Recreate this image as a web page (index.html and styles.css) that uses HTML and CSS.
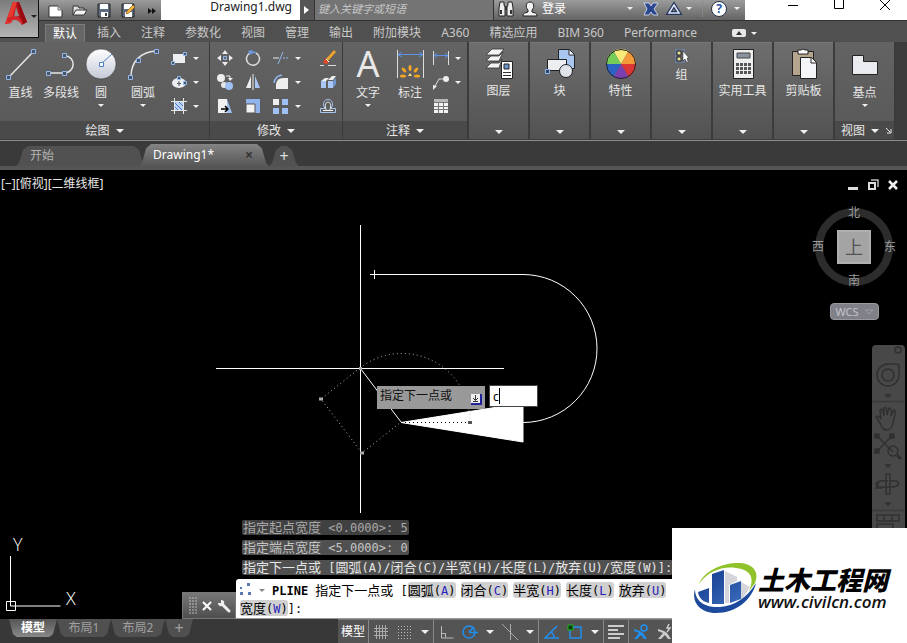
FILE: index.html
```html
<!DOCTYPE html>
<html lang="zh-CN">
<head>
  <meta charset="UTF-8">
  <title>Drawing1.dwg</title>
  <link rel="stylesheet" href="styles.css">
</head>
<body>
  <header class="top">
    <button class="app-btn" aria-label="应用程序菜单">
      <svg width="24" height="28" viewBox="0 0 24 28"><path d="M9 2h6l8 20-5 3-3-7-5-1-3 6-6 1z" fill="#b3141b"/><path d="M9 2h4L7 23l-6 1z" fill="#e8382f"/><path d="M12 7l3 9-5 1z" fill="#8f8f8f"/><path d="M3 19c5-4 11-4 16 3l-1 3c-4-6-9-7-14-2z" fill="#d4262a"/><path d="M13 2h2l8 20-4 2z" fill="#96090f"/></svg>
      <span class="caret dark"></span>
    </button>
    <div class="top-rows">
      <div class="titlebar">
        <div class="quick">
          <button aria-label="新建"><svg width="16" height="16" viewBox="0 0 16 16"><path d="M1 4h9l4 4v7H1z" fill="#fff" stroke="#333"/><path d="M10 4v4h4" fill="#ccc" stroke="#777"/></svg></button>
          <button aria-label="打开"><svg width="16" height="16" viewBox="0 0 16 16"><path d="M1 13V4h5l1 2h5v2" fill="#ddd" stroke="#333"/><path d="M1 13l3-5h11l-3 5z" fill="#f4f4f4" stroke="#333"/></svg></button>
          <button aria-label="保存"><svg width="16" height="16" viewBox="0 0 16 16"><path d="M2 2h12v13H2z" fill="#5e6c80" stroke="#222"/><path d="M4 2h8v5H4zM5 10h7v5H5z" fill="#fff"/><path d="M9 11h2v3H9z" fill="#444"/></svg></button>
          <button aria-label="另存为"><svg width="16" height="16" viewBox="0 0 16 16"><path d="M2 2h12v13H2z" fill="#5e6c80" stroke="#222"/><path d="M4 2h8v5H4zM5 10h7v5H5z" fill="#fff"/><path d="M6 12l1-3 6-6 2 2-6 6z" fill="#f2b63c" stroke="#7c4a10" stroke-width=".6"/></svg></button>
          <button aria-label="更多"><svg width="16" height="16" viewBox="0 0 16 16"><path d="M4 6l4 3-4 3zM8 6l4 3-4 3z" fill="#111"/></svg></button>
        </div>
        <div class="doc-name">Drawing1.dwg</div>
        <button class="play" aria-label="展开"><svg width="6" height="8" viewBox="0 0 6 8"><path d="M0 0l5 4-5 4z" fill="#fff"/></svg></button>
        <input class="search" type="text" placeholder="键入关键字或短语" aria-label="搜索">
        <div class="info">
          <svg width="18" height="16" viewBox="0 0 18 16"><path d="M3 1h4v3l1 2v9H2V7zM11 1h4l1 6v8h-6V6l1-2z" fill="#eee" stroke="#222"/><path d="M8 5h2v4H8z" fill="#333"/><path d="M4 9v4M14 9v4" stroke="#333" stroke-width="2"/></svg>
          <button class="login"><svg width="16" height="16" viewBox="0 0 16 16"><path d="M1 15c0-3 2-3 5-4V9C3 6 4 1 8 1s5 5 2 8v2c3 1 5 1 5 4z" fill="#f2f2f2" stroke="#222"/></svg>登录<span class="caret"></span></button>
          <svg width="16" height="14" viewBox="0 0 16 14"><path d="M1 1h5l2 3 2-3h5l-4 6 4 6h-5l-2-3-2 3H1l3-6z" fill="#2a4690" stroke="#e0e6f5" stroke-width=".8"/></svg>
          <button class="tri" aria-label="A360"><svg width="16" height="14" viewBox="0 0 16 14"><path d="M8 3L3 11h10z" fill="none" stroke="#26355c" stroke-width="4"/><path d="M8 3L3 11h10z" fill="none" stroke="#dbe4f8" stroke-width="1.500"/></svg><span class="caret"></span></button>
          <button class="help" aria-label="帮助"><i>?</i><span class="caret"></span></button>
        </div>
        <div class="win-btns">
          <button aria-label="最小化"><svg width="12" height="12" viewBox="0 0 12 12"><path d="M1 6.500h10" stroke="#000"/></svg></button>
          <button aria-label="最大化"><svg width="12" height="12" viewBox="0 0 12 12"><path d="M1.500 .5h9v9h-9z" fill="none" stroke="#000"/></svg></button>
          <button aria-label="关闭"><svg width="12" height="12" viewBox="0 0 12 12"><path d="M1 1l10 10M11 1L1 11" stroke="#000"/></svg></button>
        </div>
      </div>
      <nav class="tabs">
        <button class="on">默认</button><button>插入</button><button>注释</button><button>参数化</button><button>视图</button><button>管理</button><button>输出</button><button>附加模块</button><button>A360</button><button>精选应用</button><button>BIM 360</button><button>Performance</button>
        <button class="fold" aria-label="最小化功能区"><svg width="14" height="8" viewBox="0 0 14 8"><rect width="14" height="8" rx="2" fill="#e8e8e8"/><path d="M4 6l3-4 3 4z" fill="#333"/></svg><span class="caret"></span></button>
      </nav>
    </div>
  </header>

  <section class="ribbon">
    <div class="panel">
      <div class="tools draw">
        <button class="big"><svg width="32" height="32" viewBox="0 0 32 32"><path d="M4 29L28 4" stroke="#e6e6e6" stroke-width="1.500"/><path d="M1.500 27.500h4v4h-4zM26.500 1.500h4v4h-4z" fill="#4a5460" stroke="#8fb8f0"/></svg>直线</button>
        <button class="big"><svg width="32" height="32" viewBox="0 0 32 32"><path d="M3 25h16c12 0 12-17 1-17" fill="none" stroke="#e6e6e6" stroke-width="1.500"/><path d="M1.500 23.500h4v4h-4zM17.500 23.500h4v4h-4zM17.500 5.500h4v4h-4z" fill="#4a5460" stroke="#8fb8f0"/></svg>多段线</button>
        <button class="big"><svg width="32" height="32" viewBox="0 0 32 32"><defs><linearGradient id="ball" x2="0" y2="1"><stop stop-color="#fff"/><stop offset="1" stop-color="#c3c9d6"/></linearGradient></defs><circle cx="16" cy="16" r="15" fill="url(#ball)" stroke="#333" stroke-width=".5"/><path d="M16 16L27 6" stroke="#5580c8"/><path d="M14.500 14.500h4v4h-4z" fill="#fff" stroke="#4a7cc8"/></svg>圆<span class="caret"></span></button>
        <button class="big"><svg width="32" height="32" viewBox="0 0 32 32"><path d="M4 29C4 13 14 4 29 3" fill="none" stroke="#e6e6e6" stroke-width="1.500"/><path d="M1.500 27.500h4v4h-4zM9.500 10.500h4v4h-4zM27.500 1.500h4v4h-4z" fill="#4a5460" stroke="#8fb8f0"/></svg>圆弧<span class="caret"></span></button>
        <div class="smalls">
          <button aria-label="矩形"><svg width="16" height="16" viewBox="0 0 16 16"><path d="M2 4h12v9H2z" fill="#eceef2"/><path d="M.5 11.500h3v3h-3zM12.500 2.500h3v3h-3z" fill="#4a5460" stroke="#8fb8f0"/></svg><span class="caret"></span></button>
          <button aria-label="椭圆"><svg width="16" height="16" viewBox="0 0 16 16"><ellipse cx="8" cy="9" rx="7" ry="5" fill="#eceef2"/><path d="M8 7v5M6 9.500h4" stroke="#555"/><path d="M6.500 2.500h3v3h-3zM12.500 7.500h3v3h-3z" fill="#4a5460" stroke="#8fb8f0"/></svg><span class="caret"></span></button>
          <button aria-label="图案填充"><svg width="16" height="16" viewBox="0 0 16 16"><path d="M3 3h10v10H3z" fill="#bcd2f4"/><path d="M3 8l5 5M3 4l9 9M7 3l6 6M11 3l2 2" stroke="#4b78c4"/><path d="M3.500 0v16M12.500 0v16M0 3.500h16M0 12.500h16" stroke="#e6e6e6"/></svg><span class="caret"></span></button>
        </div>
      </div>
      <button class="panel-title">绘图<span class="caret wide"></span></button>
    </div>

    <div class="panel">
      <div class="tools modify">
        <button aria-label="移动"><svg width="16" height="16" viewBox="0 0 16 16"><path d="M8 0l3 4H5zM8 16l3-4H5zM0 8l4-3v6zM16 8l-4-3v6z" fill="#eee"/><path d="M6.500 6.500h3v3h-3z" fill="none" stroke="#8fb8f0"/></svg></button>
        <button aria-label="旋转"><svg width="16" height="16" viewBox="0 0 16 16"><path d="M5 3a6.500 6.500 0 1 0 6 0" fill="none" stroke="#ddd" stroke-width="1.500"/><path d="M11 3Q8 1 4 4" fill="none" stroke="#6d9ce4" stroke-width="1.500"/><path d="M3 1l5-1-2 5z" fill="#6d9ce4"/></svg></button>
        <button class="with-caret" aria-label="修剪"><svg width="16" height="16" viewBox="0 0 16 16"><path d="M0 8h6" stroke="#eee"/><path d="M10 8h6" stroke="#8fb8f0" stroke-dasharray="2 1"/><path d="M5 14l5-12" stroke="#8fb8f0"/></svg><span class="caret"></span></button>
        <button aria-label="删除"><svg width="16" height="16" viewBox="0 0 16 16"><path d="M6 9l8-9 2 2-8 9z" fill="#f0a32a"/><path d="M5 8l4 4-2 2-4-1z" fill="#e0482a"/><path d="M6 9l3 3" stroke="#fff"/><path d="M0 15.500h4M8 15.500h8" stroke="#ddd"/></svg></button>
        <button aria-label="复制"><svg width="16" height="16" viewBox="0 0 16 16"><circle cx="4" cy="4" r="4" fill="#eee"/><circle cx="7" cy="11" r="3" fill="#e8e8e8"/><circle cx="12" cy="12" r="4" fill="#9fc0f2"/><path d="M9 2h4v3" fill="none" stroke="#eee"/><path d="M11 4h5l-3 3z" fill="#eee"/></svg></button>
        <button aria-label="镜像"><svg width="16" height="16" viewBox="0 0 16 16"><path d="M6 2v12H1z" fill="#eceef2"/><path d="M10 2v12h5z" fill="#a9c6f4"/><path d="M8 0v16" stroke="#eee"/></svg></button>
        <button class="with-caret" aria-label="圆角"><svg width="16" height="16" viewBox="0 0 16 16"><path d="M3 15V10q1-6 7-6h5v11z" fill="#eee"/><path d="M1 9q1-7 8-8" fill="none" stroke="#8fb8f0" stroke-width="1.500"/></svg><span class="caret"></span></button>
        <button aria-label="分解"><svg width="16" height="16" viewBox="0 0 16 16"><path d="M1 7h5v7H1zM8 7h5v7H8z" fill="#a9c6f4"/><path d="M1 7l4-3h4L6 7zM8 6l4-4h4l-3 4z" fill="#eee"/><path d="M13 7l3-3v6l-3 4z" fill="#7097cf"/></svg></button>
        <button aria-label="拉伸"><svg width="16" height="16" viewBox="0 0 16 16"><path d="M1 1h9v14H1z" fill="#f2f2f2"/><path d="M10 1l5 14h-5z" fill="#9fc0f2"/><path d="M4 11h6M8 8l3 3-3 3" fill="none" stroke="#000" stroke-width="1.500"/></svg></button>
        <button aria-label="缩放"><svg width="16" height="16" viewBox="0 0 16 16"><path d="M1 1h14v14H1z" fill="#8fb3ea"/><path d="M1 6h9v9H1z" fill="#f2f2f2" stroke="#555"/></svg></button>
        <button class="with-caret" aria-label="阵列"><svg width="16" height="16" viewBox="0 0 16 16"><path d="M0 1h6v6H0z" fill="#eee"/><path d="M9 1h6v6H9zM0 10h6v6H0zM9 10h6v6H9z" fill="#9fc0f2"/></svg><span class="caret"></span></button>
        <button aria-label="偏移"><svg width="16" height="16" viewBox="0 0 16 16"><path d="M.5 14.500v-4H5C2 6 4 1.500 8 1.500s6 4.500 3 9h4.500v4z" fill="none" stroke="#a9c6f4"/><path d="M3 12.500h10M6.500 12.500C4 7 6 4 8 4s4 3 1.500 8.500" fill="none" stroke="#eee"/></svg></button>
      </div>
      <button class="panel-title">修改<span class="caret wide"></span></button>
    </div>

    <div class="panel">
      <div class="tools annotate">
        <button class="big"><svg width="32" height="32" viewBox="0 0 32 32"><text x="16" y="29" text-anchor="middle" font-size="36" fill="#e8e8e8">A</text></svg>文字<span class="caret"></span></button>
        <button class="big"><svg width="32" height="32" viewBox="0 0 32 32"><path d="M3.500 2v28M29.500 2v28" stroke="#ddd"/><path d="M4 6.500h25M8 4L4 6.500 8 9M25 4l4 2.500L25 9" fill="none" stroke="#5d93e6"/><g fill="#f5a623"><ellipse cx="16" cy="20" rx="1.500" ry="3"/><ellipse cx="10" cy="22" rx="1.500" ry="3" transform="rotate(-40 10 22)"/><ellipse cx="22" cy="22" rx="1.500" ry="3" transform="rotate(40 22 22)"/><ellipse cx="9" cy="28" rx="3" ry="1.500"/><ellipse cx="23" cy="28" rx="3" ry="1.500"/></g><path d="M14 28l2-3 2 3z" fill="#ffe27a"/></svg>标注</button>
        <div class="smalls">
          <button aria-label="线性"><svg width="16" height="16" viewBox="0 0 16 16"><path d="M.5 1v14M15.500 1v14" stroke="#ddd"/><path d="M1 5.500h14M4 3L1 5.500 4 8M12 3l3 2.500L12 8" fill="none" stroke="#5d93e6"/></svg><span class="caret"></span></button>
          <button aria-label="引线"><svg width="16" height="16" viewBox="0 0 16 16"><circle cx="13" cy="5" r="3" fill="#eee"/><path d="M10 5H6L1 14" fill="none" stroke="#ddd"/><path d="M0 11v5l4-4z" fill="#eee"/></svg><span class="caret"></span></button>
          <button aria-label="表格"><svg width="16" height="16" viewBox="0 0 16 16"><path d="M1 1h14v14H1z" fill="#f2f2f2"/><path d="M1 1h14v3H1z" fill="#b8b8b8"/><path d="M1 4.500h14M1 8.500h14M1 11.500h14M5.500 4v11M10.500 4v11" stroke="#777"/></svg></button>
        </div>
      </div>
      <button class="panel-title">注释<span class="caret wide"></span></button>
    </div>

    <button class="slim">
      <svg width="32" height="32" viewBox="0 0 32 32"><path d="M3 7L9 1h12l-5 6zM3 13l5-5h8l4-4-4 9zM3 20l5-5h8l3-4-3 9z" fill="#f4f4f4" stroke="#333" stroke-width=".8"/><path d="M18.500 13.500h11v17h-11z" fill="#fff" stroke="#222"/><path d="M21 16h5v5h-5z" fill="#6d93cc" stroke="#222"/><path d="M20 24.500h8M20 27.500h8" stroke="#333"/></svg>
      图层<span class="caret wide"></span>
    </button>
    <button class="slim">
      <svg width="32" height="32" viewBox="0 0 32 32"><path d="M14.500 1.500h11l5 5v14h-16z" fill="#a9c6f0" stroke="#222"/><path d="M25 2v5h5" fill="#fff" stroke="#222"/><path d="M3.500 11.500h19v11h-19z" fill="#eceef2" stroke="#222"/><circle cx="22" cy="23" r="6.500" fill="#dfe3ea" stroke="#222"/><path d="M1.500 21.500h4v4h-4z" fill="#31445f" stroke="#8fb8f0"/></svg>
      块<span class="caret wide"></span>
    </button>
    <button class="slim">
      <svg width="32" height="32" viewBox="0 0 32 32"><path d="M16 16L8.500 3a15 15 0 0 1 15 0z" fill="#f7e87a"/><path d="M16 16l7.500-13A15 15 0 0 1 31 16z" fill="#f29a3a"/><path d="M16 16h15a15 15 0 0 1-7.500 13z" fill="#dc3535"/><path d="M16 16l7.500 13a15 15 0 0 1-15 0z" fill="#7b3fb0"/><path d="M16 16L8.500 29A15 15 0 0 1 1 16z" fill="#2c62c4"/><path d="M16 16H1A15 15 0 0 1 8.500 3z" fill="#76cc58"/><circle cx="16" cy="16" r="14.500" fill="none" stroke="#222"/></svg>
      特性<span class="caret wide"></span>
    </button>
    <button class="slim">
      <svg width="16" height="16" viewBox="0 0 16 16"><path d="M1.500 1.500h9v13h-9z" fill="none" stroke="#5d93e6" stroke-dasharray="1 1"/><path d="M3 3h4v4H3zM3 9h4v4H3z" fill="#e4e0a0" stroke="#222"/><path d="M9 3v10l2-2 2 4 1-1-1-4h2z" fill="#fff" stroke="#222" stroke-width=".5"/></svg>
      组<span class="caret wide"></span>
    </button>
    <button class="slim">
      <svg width="32" height="32" viewBox="0 0 32 32"><path d="M6.500 1.500h20v29h-20z" fill="#eee" stroke="#222"/><path d="M10 5h13v5H10z" fill="#8a94a0" stroke="#444"/><path d="M9 15h3v3H9zM13 15h3v3h-3zM17 15h3v3h-3zM21 15h3v3h-3zM9 19h3v3H9zM13 19h3v3h-3zM17 19h3v3h-3zM21 19h3v3h-3zM9 23h3v3H9zM13 23h3v3h-3zM17 23h3v3h-3zM21 23h3v3h-3z" fill="#555"/></svg>
      实用工具<span class="caret wide"></span>
    </button>
    <button class="slim">
      <svg width="32" height="32" viewBox="0 0 32 32"><path d="M4.500 3.500h21v24h-21z" fill="#b5a58f" stroke="#222"/><path d="M10 2h3l2-1 2 1h3v4H10z" fill="#fff" stroke="#222"/><path d="M12.500 9.500h11l5 5v16h-16z" fill="#f4f5f8" stroke="#222"/><path d="M23 10v5h5" fill="#fff" stroke="#222"/></svg>
      剪贴板<span class="caret wide"></span>
    </button>
    <div class="panel view">
      <div class="tools">
        <button class="big"><svg width="32" height="32" viewBox="0 0 32 32"><path d="M3.500 7.500h11v6h14v13h-25z" fill="#e9ebee" stroke="#222"/></svg>基点<span class="caret"></span></button>
      </div>
      <button class="panel-title">视图<span class="caret wide"></span><svg width="7" height="7" viewBox="0 0 7 7"><path d="M1 1l4 4M6 2v4H2" fill="none" stroke="#eee"/></svg></button>
    </div>
  </section>

  <nav class="files">
    <button class="file start">开始</button>
    <button class="file current">Drawing1*<span class="close">×</span></button>
    <button class="file add">+</button>
  </nav>

  <main class="canvas">
    <svg class="drawing" width="100%" height="100%">
      <g stroke="#fff" fill="none">
        <path d="M360.500 55v288M216 198.500h288"/>
        <path d="M370 104.500h153a74 74 0 0 1 0 148M374.500 100v9"/>
        <path d="M401 252.500L523 233v39z" fill="#fff"/>
        <path d="M360.500 198.500L401 252"/>
        <g stroke="#bbb" stroke-dasharray="1 3">
          <path d="M360 198l-39 31 41 54 39-31"/>
          <path d="M360 198a68 68 0 0 1 110 54"/>
        </g>
        <path d="M405 252.500h64" stroke="#000" stroke-dasharray="1 3"/>
        <path d="M10.500 386v50h50M6.500 431.500h9v9h-9z"/>
      </g>
      <path d="M319 227.500h4v3h-4zM360 281.500h4v3h-4zM359 197h3v3h-3z" fill="#aaa"/>
      <path d="M468 251h4v3h-4z" fill="#555"/>
      <text class="axis" x="13" y="381">Y</text>
      <text class="axis" x="66" y="435">X</text>
    </svg>

    <div class="view-label">[−][俯视][二维线框]</div>
    <div class="view-btns">
      <button aria-label="最小化"><svg width="12" height="12" viewBox="0 0 12 12"><path d="M1 8h10v3H1z" fill="#ddd"/></svg></button>
      <button aria-label="还原"><svg width="12" height="12" viewBox="0 0 12 12"><path d="M4 1h7v7" fill="none" stroke="#bbb" stroke-width="1.500"/><path d="M2 4h6v6H2z" fill="none" stroke="#ddd" stroke-width="2"/></svg></button>
      <button aria-label="关闭"><svg width="12" height="12" viewBox="0 0 12 12"><path d="M2 2l8 8M10 2l-8 8" stroke="#eee" stroke-width="2.500"/></svg></button>
    </div>

    <div class="compass">
      <span>北</span>
      <div class="ew"><span>西</span><button class="cube">上</button><span>东</span></div>
      <span>南</span>
    </div>
    <button class="wcs">WCS <svg width="10" height="6" viewBox="0 0 10 6"><path d="M1 1h8L5 5z" fill="none" stroke="#9c9ca4"/></svg></button>

    <div class="navbar">
      <svg width="32" height="190" viewBox="0 0 32 190" fill="none" stroke="#303030" stroke-width="1.500">
        <circle cx="26" cy="5" r="3"/>
        <path d="M16 19h8q3 0 3 3v8a11 11 0 1 1-11-11z"/><circle cx="16" cy="30" r="6"/><path d="M0 56.500h32M0 165.500h32" stroke="#3a3a3a"/>
        <path d="M8 78l-4-6c2-2 4 0 5 2l-1-9c2-2 3 0 4 6V63c2-1 3 0 3 7l2-7c2 0 3 1 2 8l3-6c2 1 2 2 0 8-1 8-3 12-7 12s-5-3-7-7z"/>
        <path d="M5 91l16 16M20 91L5 106"/><path d="M3 89h4v4H3zM18 89h4v4h-4zM3 104h4v4H3z" fill="#303030"/><circle cx="21" cy="106" r="5"/><path d="M25 110l4 4" stroke-width="3"/>
        <path d="M14 129h4v20h-4zM16 136c-16-2-16 8 0 6 14 1 14-8 2-6M7 137l-3 6h6"/>
        <path d="M5 170h22v6H5zM5 179h16v6H5zM12 170v6M20 170v6"/>
        <path d="M14 50h4l-2 2zM14 120h4l-2 2zM14 158h4l-2 2z" fill="#303030"/>
      </svg>
    </div>

    <label class="prompt" for="dyn">指定下一点或<svg width="11" height="11" viewBox="0 0 11 11"><path d="M0 0h11v11H0z" fill="#22229c"/><path d="M0 0h9v9H0z" fill="#eee"/><path d="M4.500 1v5M2 4l2.500 2.500L7 4M2 7.500h5" fill="none" stroke="#333"/></svg></label>
    <div class="dyn-box"><input id="dyn" type="text" value="c"><span class="cursor"></span></div>

    <div class="history">
      <p class="old">指定起点宽度<code> &lt;0.0000&gt;: 5</code></p>
      <p class="mid">指定端点宽度<code> &lt;5.0000&gt;: 0</code></p>
      <p>指定下一点或<code> [</code>圆弧<code>(A)/</code>闭合<code>(C)/</code>半宽<code>(H)/</code>长度<code>(L)/</code>放弃<code>(U)/</code>宽度<code>(W)]:</code></p>
    </div>
    <div class="command">
      <div class="grip">
        <svg width="8" height="18" viewBox="0 0 8 18"><path d="M1 0v18M4 0v18M7 0v18" stroke="#bbb" stroke-dasharray="2 1"/></svg>
        <button aria-label="关闭"><svg width="10" height="10" viewBox="0 0 10 10"><path d="M1 1l8 8M9 1L1 9" stroke="#fff" stroke-width="2"/></svg></button>
        <button aria-label="自定义"><svg width="14" height="14" viewBox="0 0 14 14"><path d="M5 5l7 7" stroke="#eee" stroke-width="3" stroke-linecap="round"/><path d="M4 1v3H1c0 4 5 4 6 1s-1-4-3-4z" fill="#eee"/></svg></button>
      </div>
      <div class="line">
        <svg width="12" height="12" viewBox="0 0 12 12"><path d="M7 0h3v3H7zM0 4h2v2H0zM0 9h3v3H0zM8 9h3v3H8z" fill="#5a78b8"/></svg><span class="caret grey"></span><code><b>PLINE</b> </code>指定下一点或<code> [</code><button>圆弧<code>(<i>A</i>)</code></button><button>闭合<code>(<i>C</i>)</code></button><button>半宽<code>(<i>H</i>)</code></button><button>长度<code>(<i>L</i>)</code></button><button>放弃<code>(<i>U</i>)</code></button><br>
        <button>宽度<code>(<i>W</i>)</code></button><code>]:</code>
      </div>
    </div>
  </main>

  <footer class="bottom">
    <nav class="layouts">
      <button class="on">模型</button><button>布局1</button><button>布局2</button><button class="plus">+</button>
    </nav>
    <div class="status">
      <button class="space">模型</button>
      <div class="group">
        <button aria-label="栅格"><svg width="16" height="16" viewBox="0 0 16 16"><path d="M3.500 1v14M6.500 1v14M9.500 1v14M12.500 1v14M1 4.500h14M1 7.500h14M1 11.500h14" stroke="#aaa"/></svg></button>
        <button aria-label="捕捉"><svg width="16" height="16" viewBox="0 0 16 16"><path d="M1 2.500h15M1 5.500h15M1 8.500h15M1 11.500h15M1 14.500h15" stroke="#bbb" stroke-dasharray="1 2"/></svg></button>
        <span class="caret wide"></span>
      </div>
      <div class="group">
        <button aria-label="正交"><svg width="16" height="16" viewBox="0 0 16 16"><path d="M3.500 2v12h12M3.500 9.500h4v4" fill="none" stroke="#bbb"/></svg></button>
        <button aria-label="极轴"><svg width="16" height="16" viewBox="0 0 16 16"><circle cx="7" cy="8" r="6" fill="none" stroke="#1f8ff0" stroke-width="1.500"/><path d="M7 8.500h9M7 8l5-5" stroke="#1f8ff0" stroke-width="1.500"/></svg></button>
        <span class="caret wide"></span>
        <button aria-label="等轴测"><svg width="16" height="16" viewBox="0 0 16 16"><path d="M0 0l16 16M8.500 0v16" stroke="#aaa"/></svg></button>
        <span class="caret wide"></span>
      </div>
      <div class="group">
        <button aria-label="追踪"><svg width="16" height="16" viewBox="0 0 16 16"><path d="M14 2L2 14h14M8 8q3 2 3 6" fill="none" stroke="#1f8ff0" stroke-width="1.500"/></svg></button>
        <button aria-label="对象捕捉"><svg width="16" height="16" viewBox="0 0 16 16"><path d="M3 3h11v11H3z" fill="none" stroke="#1f8ff0" stroke-width="1.500"/><path d="M1 1h5v5H1z" fill="#0a3c0a" stroke="#22b422"/></svg></button>
        <span class="caret wide"></span>
      </div>
      <div class="group">
        <button aria-label="线宽"><svg width="16" height="16" viewBox="0 0 16 16"><path d="M0 2h16M0 6h10M0 10h16M0 14h12" stroke="#ccc" stroke-width="2"/></svg></button>
      </div>
      <div class="group">
        <button aria-label="注释可见性"><svg width="16" height="16" viewBox="0 0 16 16"><circle cx="11" cy="4" r="3" fill="none" stroke="#1f8ff0" stroke-width="1.500"/><path d="M1 5l6 2 3 2 4 6h-3l-3-4-4 4H1l5-6-5-2z" fill="#1f8ff0"/></svg></button>
        <button aria-label="自动缩放"><svg width="16" height="16" viewBox="0 0 16 16"><path d="M12 0l-2 4h3l-3 4" fill="none" stroke="#ccc" stroke-width="1.500"/><path d="M1 5l6 2 3 2 4 6h-3l-3-4-4 4H1l5-6-5-2z" fill="#ccc"/></svg></button>
      </div>
    </div>
  </footer>

  <aside class="brand">
    <svg width="66" height="54" viewBox="0 0 66 54">
      <defs><linearGradient id="tower" x2="1" y2="1"><stop stop-color="#12388a"/><stop offset="1" stop-color="#3a6cbc"/></linearGradient></defs>
      <path d="M31 10l12 6v4l-8 4v18h-4zM47 21l9 5-7 11-2 1z" fill="#d4d6dc"/>
      <path d="M4 31l11-4v15C10 41 5 38 4 31zM18 13l12-4v34H18zM36 24l11-4v18l-11 4z" fill="url(#tower)"/>
      <path d="M5 23C10 10 28 2 44 2c14 0 22 8 17 20l-6 8c5-11 4-21-13-23C28 5 13 11 5 23z" fill="#8fc329"/>
      <path d="M1 28c-4 14 6 24 21 24 20 0 36-13 40-30-9 15-22 23-36 24C12 47 1 41 1 28z" fill="#1d4a9c"/>
    </svg>
    <div class="brand-text"><strong>土木工程网</strong><a href="#">www.civilcn.com</a></div>
  </aside>
</body>
</html>
```
FILE: styles.css
```css
* {
  box-sizing: border-box;
}
body {
  margin: 0;
  height: 100vh;
  display: flex;
  flex-direction: column;
  overflow: hidden;
  position: relative;
  background: #000;
  color: #e6e6e6;
  font: 12px/18px "Noto Sans", "Noto Sans CJK SC", sans-serif;
}
button {
  display: flex;
  align-items: center;
  justify-content: center;
  padding: 0;
  border: 0;
  background: none;
  color: inherit;
  font: inherit;
  white-space: nowrap;
}
svg {
  flex: none;
  overflow: visible;
}
.caret {
  flex: none;
  border: 3px solid transparent;
  border-top-color: #f0f0f0;
  border-bottom: 0;
}
.caret.wide {
  border-width: 4px 4px 0;
}
.caret.dark {
  border-top-color: #222;
}
.caret.grey {
  border-top-color: #888;
}

/* title bar + ribbon tabs */
.top {
  display: flex;
  height: 42px;
  flex: none;
  background: #505050;
}
.app-btn {
  width: 39px;
  height: 38px;
  align-items: flex-start;
  padding-left: 2px;
  gap: 3px;
  background: linear-gradient(#7c7c7c, #b4b4b4);
  border: solid #111;
  border-width: 0 1px 1px 0;
}
.app-btn .caret {
  margin-top: 15px;
}
.top-rows {
  flex: 1;
  min-width: 0;
}
.titlebar {
  display: flex;
  height: 21px;
  border-bottom: 1px solid #333;
  background: linear-gradient(#9c9c9c, #636363);
}
.quick {
  width: 122px;
  display: flex;
  gap: 8px;
  padding-left: 9px;
}
.doc-name {
  flex: 1;
  min-width: 0;
  padding-right: 8px;
  background: #fff;
  color: #222;
  text-align: right;
  line-height: 13px;
}
.play {
  width: 14px;
  background: #555;
}
.search {
  width: 180px;
  padding: 0 3px 3px;
  border: 1px solid #333;
  border-width: 0 1px 0 1px;
  background: #747474;
  font: italic 11px "Noto Sans", "Noto Sans CJK SC", sans-serif;
}
.search::placeholder {
  color: #c6c6c6;
}
.info {
  width: 251px;
  display: flex;
  align-items: center;
  gap: 7px;
  padding: 0 5px 3px 3px;
}
.login {
  gap: 4px;
  color: #fff;
}
.login .caret {
  margin: 0 3px 0 57px;
}
.tri {
  gap: 4px;
}
.help {
  gap: 7px;
  margin-left: 3px;
  padding-left: 8px;
  border-left: 1px solid #888;
}
.help i {
  width: 16px;
  height: 16px;
  border-radius: 50%;
  background: #fff;
  border: 1px solid #234;
  color: #2456a8;
  font: bold 12px/14px "Noto Sans", sans-serif;
}
.win-btns {
  width: 162px;
  display: flex;
  justify-content: flex-end;
  gap: 34px;
  padding: 0 16px 10px 0;
  background: #fff;
}
.tabs {
  display: flex;
  align-items: flex-end;
  height: 21px;
  padding-left: 4px;
  color: #c8c8c8;
}
.tabs button {
  height: 18px;
  margin: 0 2px;
  padding: 0 8px;
}
.tabs .on {
  background: #666;
  border: 1px solid #7c7c7c;
  border-bottom: 0;
  padding: 0 7px;
  color: #fff;
}
.tabs .fold {
  gap: 5px;
  margin-left: 17px;
}

/* ribbon */
.ribbon {
  display: flex;
  flex: none;
  height: 99px;
  padding-bottom: 1px;
  border-bottom: 1px solid #8a8d8a;
  background: #3c3c3c;
}
.panel {
  display: flex;
  flex-direction: column;
  border-right: 1px solid #3a3a3a;
  background: linear-gradient(#636363, #585858);
}
.tools {
  flex: 1;
  display: grid;
  padding-top: 4px;
}
.draw {
  grid-template-columns: 41px 40px 40px 44px 44px;
}
.modify {
  grid-template-columns: 29px 28px 46px 29px;
  grid-auto-rows: 24px;
}
.annotate {
  grid-template-columns: 50px 34px 40px;
}
.big {
  flex-direction: column;
  justify-content: flex-start;
  padding-top: 2px;
}
.big svg {
  margin-bottom: 4px;
}
.big .caret {
  margin-top: 2px;
}
.smalls button, .with-caret {
  width: 100%;
  height: 24px;
  justify-content: flex-start;
  padding-left: 6px;
  gap: 6px;
}
.panel-title {
  height: 18px;
  padding-top: 1px;
  gap: 6px;
  background: #4a4a4a;
}
.slim {
  width: 59px;
  margin-left: 2px;
  flex-direction: column;
  justify-content: flex-start;
  padding: 5px 0;
  gap: 2px;
  background: linear-gradient(#6e6e6e, #525252);
  border-top: 1px solid #777;
}
.panel + .slim {
  margin-left: 1px;
}
.slim .caret {
  margin-top: auto;
}
.view {
  width: 60px;
  margin-left: 2px;
}
.view .panel-title {
  padding-left: 4px;
}

/* drawing file tabs */
.files {
  display: flex;
  align-items: flex-end;
  flex: none;
  height: 29px;
  padding-left: 16px;
  background: #3a3a3a;
  border-bottom: 4px solid #555;
}
.file {
  height: 20px;
  justify-content: flex-start;
  background: #515151;
  color: #b4b4b4;
  clip-path: polygon(0 100%, 3px 85%, 7px 20%, 12px 0, calc(100% - 12px) 0, calc(100% - 7px) 20%, calc(100% - 3px) 85%, 100% 100%);
}
.start {
  width: 130px;
  padding-left: 14px;
}
.current {
  width: 130px;
  height: 22px;
  margin-left: -7px;
  padding: 0 16px 0 14px;
  background: linear-gradient(#848484, #565656);
  color: #fff;
}
.close {
  margin-left: auto;
  color: #333;
  font-size: 14px;
  font-weight: bold;
}
.add {
  width: 30px;
  height: 20px;
  justify-content: center;
  color: #ddd;
  font-size: 16px;
}

/* drawing area */
.canvas {
  flex: 1;
  min-height: 0;
  position: relative;
}
.drawing {
  display: block;
}
.axis {
  fill: #fff;
  font: 300 18px "Open Sans", sans-serif;
}
.view-label {
  position: absolute;
  left: 1px;
  top: 5px;
}
.view-btns {
  position: absolute;
  right: 8px;
  top: 9px;
  display: flex;
  gap: 8px;
}
.compass {
  position: absolute;
  right: 14px;
  top: 38px;
  width: 78px;
  height: 78px;
  display: flex;
  flex-direction: column;
  align-items: center;
  justify-content: space-between;
  border: 8px solid #2c2c2c;
  border-radius: 50%;
  color: #9a9a9a;
}
.compass > span {
  margin: -12px 0;
}
.ew {
  display: flex;
  align-items: center;
  gap: 13px;
}
.cube {
  width: 34px;
  height: 34px;
  background: #a4a4a4;
  border: 2px solid #b0b0b0;
  color: #555;
  font-size: 18px;
}
.wcs {
  position: absolute;
  right: 28px;
  top: 133px;
  width: 49px;
  height: 17px;
  gap: 5px;
  border: 1px solid #9a9a9e;
  border-radius: 4px;
  background: #808088;
  color: #c4c4cc;
  font-size: 11px;
}
.navbar {
  position: absolute;
  right: 2px;
  top: 175px;
  width: 33px;
  border-radius: 4px;
  background: #484848;
}
.prompt {
  position: absolute;
  left: 377px;
  top: 216px;
  width: 108px;
  height: 23px;
  display: flex;
  justify-content: space-between;
  align-items: flex-end;
  padding: 0 3px 4px;
  background: #999;
  color: #111;
}
.dyn-box {
  position: absolute;
  left: 489px;
  top: 215px;
}
.dyn-box input {
  display: block;
  width: 49px;
  height: 22px;
  padding: 0 3px;
  border: 1px solid #444;
  background: #fff;
  color: #000;
  font: 12px "Noto Sans", sans-serif;
}
.cursor {
  position: absolute;
  left: 10px;
  top: 3px;
  width: 1px;
  height: 16px;
  background: #000;
}
code {
  font: 12px "DejaVu Sans Mono", monospace;
  white-space: pre;
}
.history {
  position: absolute;
  left: 242px;
  bottom: 44px;
  display: flex;
  flex-direction: column;
  align-items: flex-start;
  gap: 5px;
  font-size: 13px;
}
.history p {
  margin: 0;
  padding: 0 1px;
  height: 15px;
  line-height: 15px;
  border-radius: 2px;
  background: #505050;
  white-space: nowrap;
}
.history .old {
  color: #a8a8a8;
  background: #404040;
}
.history .mid {
  color: #c4c4c4;
}
.command {
  position: absolute;
  left: 182px;
  right: 20px;
  bottom: 0;
  display: flex;
  align-items: flex-end;
}
.grip {
  display: flex;
  align-items: center;
  justify-content: space-between;
  width: 54px;
  height: 27px;
  padding: 0 4px 0 6px;
  border: 1px solid #777;
  background: linear-gradient(#777, #4e4e4e);
}
.line {
  flex: 1;
  height: 40px;
  padding: 2px 4px;
  border-bottom: 1px solid #999;
  border-radius: 3px 0 0 0;
  background: #fff;
  color: #000;
  font-size: 13px;
  white-space: nowrap;
}
.line .caret {
  display: inline-block;
  margin: 0 7px 3px;
}
.line button {
  display: inline-block;
  height: 16px;
  margin-right: 5px;
  line-height: 16px;
  border-radius: 3px;
  background: #d0d0d0;
}
.line br + button {
  margin-right: 0;
}
.line i {
  font-style: normal;
  color: #2a1fb8;
}

/* bottom bar */
.bottom {
  display: flex;
  flex: none;
  height: 24px;
  background: #383838;
}
.layouts {
  display: flex;
  width: 338px;
  padding-left: 9px;
}
.layouts button {
  width: 54px;
  height: 18px;
  background: #505050;
  color: #a0a0a0;
  clip-path: polygon(0 0, 100% 0, calc(100% - 4px) 85%, calc(100% - 8px) 100%, 8px 100%, 4px 85%);
}
.layouts .on {
  width: 48px;
  background: linear-gradient(#555, #888);
  color: #fff;
  font-weight: bold;
}
.layouts .plus {
  width: 28px;
  font-size: 16px;
}
.status {
  flex: 1;
  display: flex;
  background: #545454;
  border-top: 1px solid #777;
}
.space {
  width: 30px;
  color: #fff;
}
.group {
  display: flex;
  align-items: center;
  gap: 8px;
  padding: 0 4px;
  border-left: 1px solid #888;
}

/* site badge */
.brand {
  position: absolute;
  right: 0;
  bottom: 0;
  width: 235px;
  height: 115px;
  display: flex;
  align-items: center;
  padding: 4px 0 0 22px;
  background: #fff;
}
.brand-text {
  display: flex;
  flex-direction: column;
  margin-left: -2px;
}
.brand-text strong {
  color: #000;
  font: italic 900 26px/28px "Noto Sans CJK SC", sans-serif;
}
.brand-text a {
  color: #111;
  font: italic 600 17px/18px "Open Sans", sans-serif;
  text-decoration: none;
}
```
